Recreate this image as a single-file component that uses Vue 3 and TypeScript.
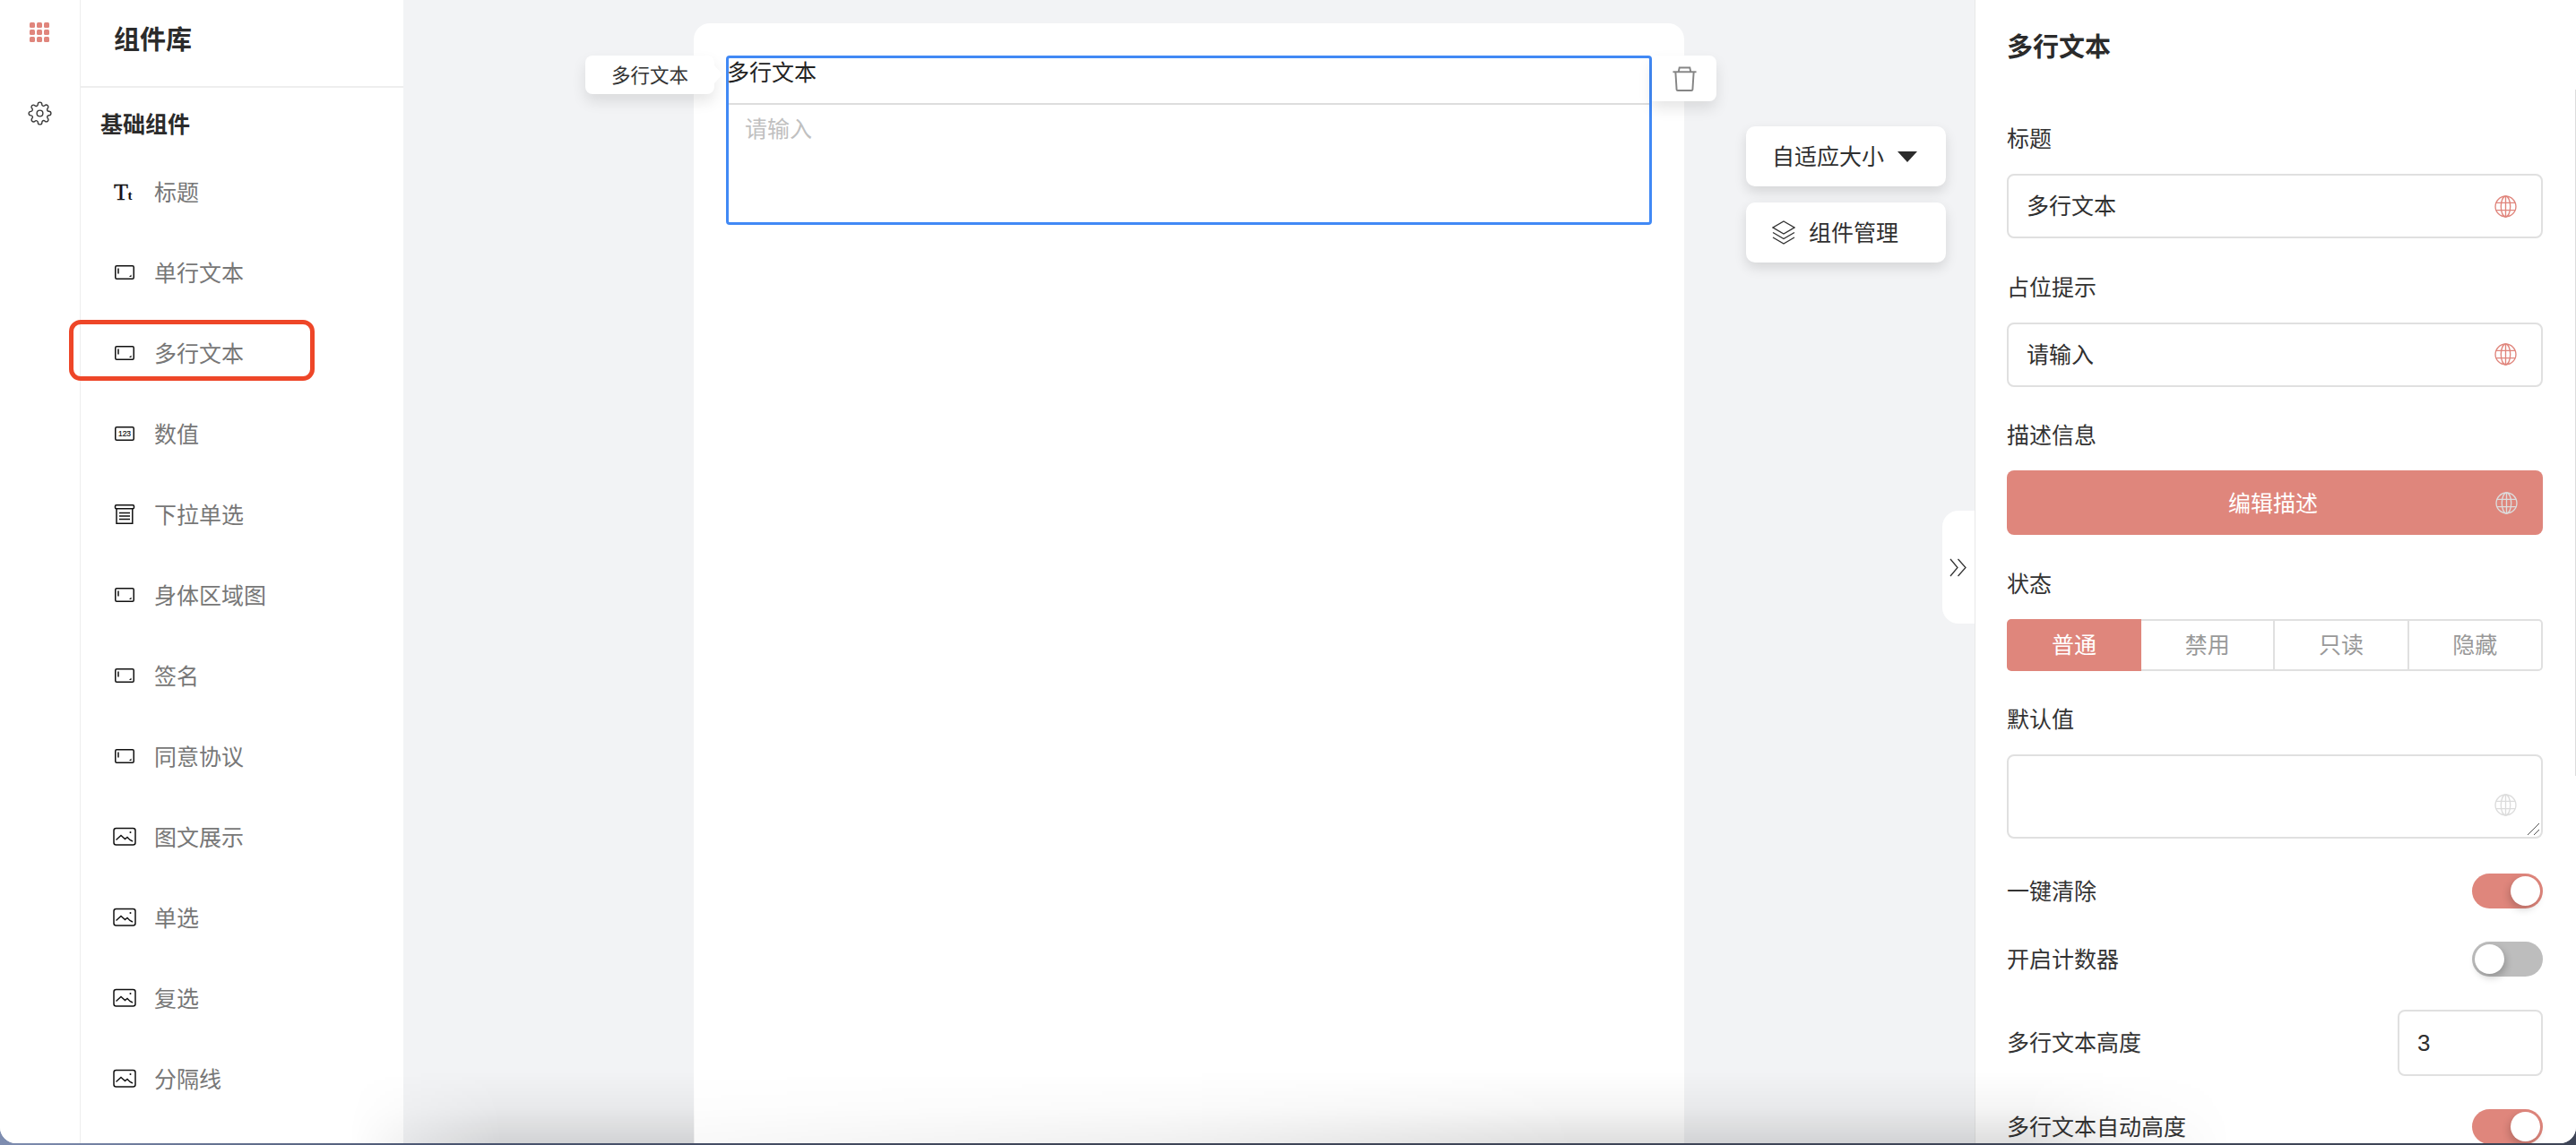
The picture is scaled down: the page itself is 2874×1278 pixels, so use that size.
<script setup lang="ts">
type IconKind = 'title' | 'input' | 'number' | 'select' | 'image'
interface Item { label: string; icon: IconKind; marked?: boolean }

const items: Item[] = [
  { label: '标题', icon: 'title' },
  { label: '单行文本', icon: 'input' },
  { label: '多行文本', icon: 'input', marked: true },
  { label: '数值', icon: 'number' },
  { label: '下拉单选', icon: 'select' },
  { label: '身体区域图', icon: 'input' },
  { label: '签名', icon: 'input' },
  { label: '同意协议', icon: 'input' },
  { label: '图文展示', icon: 'image' },
  { label: '单选', icon: 'image' },
  { label: '复选', icon: 'image' },
  { label: '分隔线', icon: 'image' },
]
const states = ['普通', '禁用', '只读', '隐藏']
const gridCells = Array.from({ length: 9 }, (_, i) => i)
</script>

<template>
  <div class="window">
    <div class="app">
      <nav class="rail">
        <div class="grid-icon"><i v-for="c in gridCells" :key="c"></i></div>
        <svg class="gear" viewBox="0 0 24 24" fill="none" stroke="#3a3a3a" stroke-width="1.25">
          <circle cx="12" cy="12" r="3" />
          <path d="M19.4 15a1.65 1.65 0 0 0 .33 1.82l.06.06a2 2 0 0 1 0 2.83 2 2 0 0 1-2.83 0l-.06-.06a1.65 1.65 0 0 0-1.82-.33 1.65 1.65 0 0 0-1 1.51V21a2 2 0 0 1-2 2 2 2 0 0 1-2-2v-.09A1.65 1.65 0 0 0 9 19.4a1.65 1.65 0 0 0-1.82.33l-.06.06a2 2 0 0 1-2.83 0 2 2 0 0 1 0-2.83l.06-.06a1.65 1.65 0 0 0 .33-1.82 1.65 1.65 0 0 0-1.51-1H3a2 2 0 0 1-2-2 2 2 0 0 1 2-2h.09A1.65 1.65 0 0 0 4.6 9a1.65 1.65 0 0 0-.33-1.82l-.06-.06a2 2 0 0 1 0-2.83 2 2 0 0 1 2.83 0l.06.06a1.65 1.65 0 0 0 1.82.33H9a1.65 1.65 0 0 0 1-1.51V3a2 2 0 0 1 2-2 2 2 0 0 1 2 2v.09a1.65 1.65 0 0 0 1 1.51 1.65 1.65 0 0 0 1.82-.33l.06-.06a2 2 0 0 1 2.83 0 2 2 0 0 1 0 2.83l-.06.06a1.65 1.65 0 0 0-.33 1.82V9a1.65 1.65 0 0 0 1.51 1H21a2 2 0 0 1 2 2 2 2 0 0 1-2 2h-.09a1.65 1.65 0 0 0-1.51 1z" />
        </svg>
      </nav>

      <aside class="library">
        <header class="library-head">组件库</header>
        <h3 class="library-group">基础组件</h3>
        <ul class="library-list">
          <li v-for="item in items" :key="item.label" class="library-item" :class="{ marked: item.marked }">
            <svg class="item-icon" viewBox="0 0 26 26" fill="none" stroke="#111" stroke-width="1.5">
              <template v-if="item.icon === 'title'">
                <text x="1" y="22" class="tt-big">T</text>
                <text x="16.5" y="22" class="tt-small">t</text>
              </template>
              <template v-else-if="item.icon === 'input'">
                <rect x="2.75" y="5.75" width="20.5" height="14.5" rx="1.5" />
                <path d="M6 8.5v6" />
                <path d="M20.5 15.5v2.5h-2.5z" fill="#111" stroke="none" />
              </template>
              <template v-else-if="item.icon === 'number'">
                <rect x="2.75" y="5.75" width="20.5" height="14.5" rx="1.5" />
                <text x="13" y="16.2" text-anchor="middle" class="num">123</text>
              </template>
              <template v-else-if="item.icon === 'select'">
                <rect x="2.5" y="2.75" width="21" height="4" rx="1.2" />
                <path d="M4 7v16.2h17.8V7" />
                <path d="M7 11.5h12M7 15h12M7 18.5h12" stroke-width="1.3" />
              </template>
              <template v-else>
                <rect x="1" y="3.5" width="24" height="18.5" rx="2.5" />
                <path d="M3.5 16.5l5.5-5 4.5 4 2.5-2 3 3 3 1.5" stroke-width="1.4" />
                <circle cx="19.5" cy="8" r="1" fill="#111" stroke="none" />
              </template>
            </svg>
            <span>{{ item.label }}</span>
          </li>
        </ul>
      </aside>

      <main class="stage">
        <section class="canvas">
          <div class="block">
            <div class="block-tag">多行文本</div>
            <div class="block-title">多行文本</div>
            <div class="block-placeholder">请输入</div>
            <div class="block-trash">
              <svg viewBox="0 0 30 30" fill="none" stroke="#858585" stroke-width="2">
                <path d="M1.5 7h27" />
                <path d="M8 7l1-5h12l1 5" />
                <path d="M4.5 7l1.3 20.5c.1 .7 .5 1 1.2 1h16c.7 0 1.100-.3 1.200-1L25.500 7" />
              </svg>
            </div>
          </div>
        </section>

        <div class="tools">
          <button class="tool">
            <span>自适应大小</span>
            <svg class="caret" viewBox="0 0 22 12"><path d="M0 0h22L11 12z" fill="#2b2b2b" /></svg>
          </button>
          <button class="tool">
            <svg class="layers" viewBox="0 0 26 27" fill="none" stroke="#333" stroke-width="1.4">
              <path d="M13 1L25 8 13 15 1 8z" />
              <path d="M1 13.500l12 7 12-7" />
              <path d="M1 19l12 7 12-7" />
            </svg>
            <span>组件管理</span>
          </button>
        </div>

        <div class="collapse">
          <svg viewBox="0 0 20 21" fill="none" stroke="#333" stroke-width="1.300">
            <path d="M1 1l8 9.500-8 9.500" />
            <path d="M9.500 1l8.500 9.500-8.500 9.500" />
          </svg>
        </div>
      </main>

      <aside class="props">
        <h2 class="props-title">多行文本</h2>

        <div class="field">
          <label>标题</label>
          <div class="box">
            <span>多行文本</span>
            <svg class="globe" viewBox="0 0 24 24" fill="none" stroke="#e0857c" stroke-width="1.300"><circle cx="12" cy="12" r="11" /><ellipse cx="12" cy="12" rx="5" ry="11" /><path d="M12 1v22M2 8h20M2 16h20" /></svg>
          </div>
        </div>

        <div class="field">
          <label>占位提示</label>
          <div class="box">
            <span>请输入</span>
            <svg class="globe" viewBox="0 0 24 24" fill="none" stroke="#e0857c" stroke-width="1.300"><circle cx="12" cy="12" r="11" /><ellipse cx="12" cy="12" rx="5" ry="11" /><path d="M12 1v22M2 8h20M2 16h20" /></svg>
          </div>
        </div>

        <div class="field">
          <label>描述信息</label>
          <div class="box primary">
            <span>编辑描述</span>
            <svg class="globe" viewBox="0 0 24 24" fill="none" stroke="#dcdcdc" stroke-width="1.300"><circle cx="12" cy="12" r="11" /><ellipse cx="12" cy="12" rx="5" ry="11" /><path d="M12 1v22M2 8h20M2 16h20" /></svg>
          </div>
        </div>

        <div class="field">
          <label>状态</label>
          <div class="segments">
            <div v-for="(s, i) in states" :key="s" class="segment" :class="{ active: i === 0 }">{{ s }}</div>
          </div>
        </div>

        <div class="field">
          <label>默认值</label>
          <div class="box area">
            <svg class="globe" viewBox="0 0 24 24" fill="none" stroke="#dcdcdc" stroke-width="1.300"><circle cx="12" cy="12" r="11" /><ellipse cx="12" cy="12" rx="5" ry="11" /><path d="M12 1v22M2 8h20M2 16h20" /></svg>
            <svg class="grip" viewBox="0 0 15 15" fill="none" stroke="#555" stroke-width="1"><path d="M1 14L14 1M8 14l6-6" /></svg>
          </div>
        </div>

        <div class="rows">
          <div class="row">
            <span>一键清除</span>
            <div class="switch on"><i></i></div>
          </div>
          <div class="row">
            <span>开启计数器</span>
            <div class="switch"><i></i></div>
          </div>
          <div class="row tall">
            <span>多行文本高度</span>
            <div class="number">3</div>
          </div>
          <div class="row">
            <span>多行文本自动高度</span>
            <div class="switch on"><i></i></div>
          </div>
        </div>
      </aside>

      <div class="scrollbar"></div>
      <div class="bottom-shade"></div>
    </div>
  </div>
</template>

<style>
html,
body {
  margin: 0;
  background: #40485c;
}
</style>

<style scoped>
.window {
  width: 2874px;
  height: 1278px;
  overflow: hidden;
  background: linear-gradient(to right, #7e8db0 0, #4a5570 500px, #3e4557 1200px, #3e4557 100%);
  font-family: "Noto Sans CJK SC", "Liberation Sans", sans-serif;
  color: #333;
}
.app {
  position: relative;
  display: flex;
  height: 1276px;
  overflow: hidden;
  border-radius: 0 0 18px 18px;
  background: #f2f3f5;
}

/* left rail */
.rail {
  box-sizing: border-box;
  flex: 0 0 90px;
  display: flex;
  flex-direction: column;
  align-items: center;
  padding-top: 25px;
  background: #fff;
  border-right: 1px solid #eeeeee;
}
.grid-icon {
  display: grid;
  grid-template-columns: repeat(3, 6px);
  grid-auto-rows: 6px;
  gap: 2px;
  margin-right: 1px;
}
.grid-icon i {
  border-radius: 1.500px;
  background: #e0857c;
}
.gear {
  width: 27px;
  height: 27px;
  margin-top: 66px;
  margin-right: 1px;
}

/* component library */
.library {
  flex: 0 0 360px;
  background: #fff;
}
.library-head {
  box-sizing: border-box;
  height: 98px;
  padding: 24px 0 0 37px;
  font-size: 29px;
  line-height: 36px;
  font-weight: 600;
  color: #2b2b2b;
  border-bottom: 2px solid #eeeeee;
}
.library-group {
  margin: 22px 0 0 22px;
  font-size: 25px;
  line-height: 34px;
  font-weight: 600;
  color: #2b2b2b;
}
.library-list {
  list-style: none;
  margin: 13px 0 0;
  padding: 0;
}
.library-item {
  position: relative;
  display: flex;
  align-items: center;
  gap: 20px;
  height: 90px;
  font-size: 25px;
  color: #777;
  padding-left: 36px;
}
.library-item span {
  padding-top: 2px;
}
.library-item.marked::after {
  content: "";
  position: absolute;
  left: -13px;
  top: 10px;
  width: 274px;
  height: 68px;
  box-sizing: border-box;
  border: 5.500px solid #ee4628;
  border-radius: 13px;
}
.item-icon {
  flex: none;
  width: 26px;
  height: 26px;
  margin-top: 3px;
  overflow: visible;
}
.tt-big {
  font: 400 26px "Liberation Serif", serif;
  fill: #111;
  stroke: #111;
  stroke-width: 0.400;
}
.tt-small {
  font: 700 15px "Liberation Serif", serif;
  fill: #111;
  stroke: none;
}
.num {
  font: 400 8.500px "Liberation Sans", sans-serif;
  fill: #111;
  stroke: #111;
  stroke-width: 0.200;
}

/* stage */
.stage {
  position: relative;
  flex: 1 1 auto;
  min-width: 0;
  display: flex;
  align-items: flex-start;
  padding: 26px 0 0 324px;
  box-sizing: border-box;
}
.canvas {
  flex: 0 0 1105px;
  box-sizing: border-box;
  height: 1300px;
  padding: 36px;
  background: #fff;
  border-radius: 18px 18px 0 0;
}
.block {
  position: relative;
  box-sizing: border-box;
  height: 189px;
  border: 3px solid #4189f5;
  border-radius: 4px;
}
.block-title {
  box-sizing: border-box;
  margin-top: -2px;
  text-indent: -2px;
  font-size: 25px;
  line-height: 32px;
  color: #222;
  border-bottom: 2px solid #dddddd;
  height: 54px;
}
.block-placeholder {
  padding: 9px 0 0 18px;
  font-size: 25px;
  line-height: 32px;
  color: #c0c0c0;
}
.block-tag {
  position: absolute;
  left: -160px;
  top: -3px;
  width: 144px;
  height: 43px;
  padding-bottom: 3px;
  box-sizing: border-box;
  display: flex;
  align-items: center;
  justify-content: center;
  font-size: 21.500px;
  color: #333;
  background: #fff;
  border-radius: 8px;
  box-shadow: 0 8px 16px rgba(0, 0, 0, 0.1);
}
.block-tag::after {
  content: "";
  position: absolute;
  left: 100%;
  top: 11px;
  border-left: 9px solid #fff;
  border-top: 10px solid transparent;
  border-bottom: 10px solid transparent;
}
.block-trash {
  position: absolute;
  left: 100%;
  top: -3px;
  margin-left: 3px;
  width: 72px;
  height: 51px;
  display: flex;
  align-items: center;
  justify-content: center;
  background: #fff;
  border-radius: 0 8px 8px 0;
  box-shadow: 0 8px 16px rgba(0, 0, 0, 0.1);
}
.block-trash svg {
  width: 29px;
  height: 30px;
}

/* floating tools */
.tools {
  flex: none;
  display: flex;
  flex-direction: column;
  gap: 18px;
  margin: 115px 0 0 69px;
}
.tool {
  box-sizing: border-box;
  width: 223px;
  height: 67px;
  display: flex;
  align-items: center;
  padding: 0 0 0 29px;
  border: 0;
  background: #fff;
  border-radius: 10px;
  font: inherit;
  font-size: 25px;
  color: #2f2f2f;
  box-shadow: 0 6px 14px rgba(0, 0, 0, 0.12);
}
.tool span {
  padding-bottom: 4px;
}
.caret {
  width: 22px;
  height: 12px;
  margin: 0 0 0 15px;
}
.layers {
  width: 26px;
  height: 27px;
  margin-right: 15px;
}
.collapse {
  position: absolute;
  right: 0;
  top: 570px;
  width: 36px;
  height: 126px;
  display: flex;
  align-items: center;
  justify-content: center;
  background: #fff;
  border-radius: 18px 0 0 18px;
}
.collapse svg {
  width: 20px;
  height: 21px;
}

/* property panel */
.props {
  box-sizing: border-box;
  flex: 0 0 671px;
  padding: 30px 37px 0 35px;
  background: #fff;
  border-left: 1px solid #e8e8e8;
}
.props-title {
  margin: 0 0 69px;
  font-size: 29px;
  line-height: 40px;
  font-weight: 600;
  color: #2b2b2b;
}
.field {
  margin-top: 38.500px;
}
.props-title + .field {
  margin-top: 0;
}
.field label {
  display: block;
  margin-top: -3px;
  margin-bottom: 24px;
  font-size: 25px;
  line-height: 34px;
  color: #333;
}
.box {
  position: relative;
  box-sizing: border-box;
  height: 72px;
  display: flex;
  align-items: center;
  padding: 0 27px 0 20px;
  font-size: 25px;
  color: #2f2f2f;
  border: 2px solid #e0e0e0;
  border-radius: 8px;
}
.box > span {
  padding-bottom: 4px;
}
.globe {
  flex: none;
  width: 25px;
  height: 25px;
  margin-left: auto;
}
.box.primary {
  justify-content: center;
  border: 0;
  padding-left: 23px;
  background: #df867c;
  color: #fff;
}
.box.primary > span {
  padding-bottom: 2px;
}
.box.primary .globe {
  position: absolute;
  right: 28px;
}
.box.area {
  height: 94px;
}
.box.area .globe {
  position: absolute;
  right: 27px;
  top: 42px;
}
.grip {
  position: absolute;
  right: 1px;
  bottom: 1px;
  width: 15px;
  height: 15px;
}
.segments {
  display: flex;
  height: 58px;
}
.segment {
  flex: 1 1 0;
  display: flex;
  align-items: center;
  justify-content: center;
  box-sizing: border-box;
  padding-bottom: 3px;
  font-size: 25px;
  color: #999;
  border: 2px solid #e0e0e0;
  border-left-width: 0;
}
.segment:last-child {
  border-radius: 0 5px 5px 0;
}
.segment.active {
  flex: 0 0 150px;
  border: 0;
  color: #fff;
  background: #df867c;
  border-radius: 5px 0 0 5px;
}
.rows {
  display: flex;
  flex-direction: column;
  gap: 37px;
  margin-top: 39px;
}
.row {
  display: flex;
  align-items: center;
  justify-content: space-between;
  height: 39px;
  font-size: 25px;
  line-height: 34px;
  color: #333;
}
.row > span {
  padding-bottom: 4px;
}
.row.tall {
  height: 74px;
}
.switch {
  position: relative;
  box-sizing: border-box;
  width: 79px;
  height: 39px;
  background: #bdbdbd;
  border-radius: 20px;
}
.switch i {
  position: absolute;
  left: 3px;
  top: 3px;
  width: 33px;
  height: 33px;
  border-radius: 50%;
  background: #fff;
  box-shadow: 2px 4px 8px rgba(0, 0, 0, 0.22);
}
.switch.on {
  background: #df867c;
}
.switch.on i {
  left: 43px;
  box-shadow: -2px 4px 8px rgba(0, 0, 0, 0.18);
}
.number {
  box-sizing: border-box;
  width: 162px;
  height: 74px;
  display: flex;
  align-items: center;
  padding-left: 20px;
  font-family: "Liberation Sans", sans-serif;
  font-size: 26px;
  color: #2f2f2f;
  border: 2px solid #e0e0e0;
  border-radius: 8px;
}

/* overlays */
.scrollbar {
  position: absolute;
  right: 0;
  top: 100px;
  width: 1px;
  height: 766px;
  background: #dcdcdc;
}
.bottom-shade {
  position: absolute;
  left: 0;
  right: 0;
  bottom: 0;
  height: 80px;
  pointer-events: none;
  background: linear-gradient(to top, rgba(0, 0, 0, 0.13), rgba(0, 0, 0, 0.04) 50%, rgba(0, 0, 0, 0));
  -webkit-mask-image: linear-gradient(to right, transparent 390px, rgba(0, 0, 0, 0.5) 470px, #000 560px, #000 774px, rgba(0, 0, 0, 0.2) 775px, rgba(0, 0, 0, 0.45) 1300px, #000 1760px, #000 2260px, rgba(0, 0, 0, 0.3) 2380px, transparent 2490px);
  mask-image: linear-gradient(to right, transparent 390px, rgba(0, 0, 0, 0.5) 470px, #000 560px, #000 774px, rgba(0, 0, 0, 0.2) 775px, rgba(0, 0, 0, 0.45) 1300px, #000 1760px, #000 2260px, rgba(0, 0, 0, 0.3) 2380px, transparent 2490px);
}
</style>
